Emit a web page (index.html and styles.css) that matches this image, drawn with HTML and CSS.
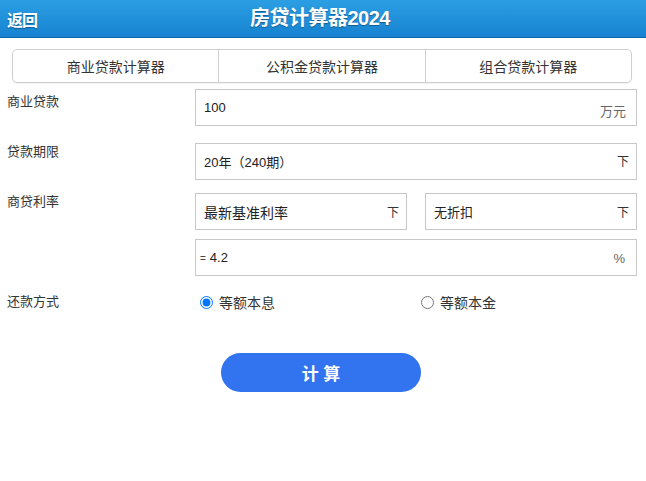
FILE: index.html
```html
<!DOCTYPE html>
<html lang="zh">
<head>
<meta charset="utf-8">
<title>房贷计算器2024</title>
<link rel="stylesheet" href="styles.css">
</head>
<body>
<header class="topbar">
  <a class="back">返回</a>
  <h1 class="title">房贷计算器2024</h1>
</header>
<nav class="tabs">
  <div class="tab">商业贷款计算器</div>
  <div class="tab">公积金贷款计算器</div>
  <div class="tab">组合贷款计算器</div>
</nav>
<main class="form">
  <div class="row row-amount">
    <div class="label">商业贷款</div>
    <div class="field">
      <div class="box box-amount"><span class="val">100</span><span class="unit unit-low">万元</span></div>
    </div>
  </div>
  <div class="row row-term">
    <div class="label">贷款期限</div>
    <div class="field">
      <div class="box"><span class="val val-term">20年（240期）</span><span class="arrow">下</span></div>
    </div>
  </div>
  <div class="row row-rate">
    <div class="label">商贷利率</div>
    <div class="field">
      <div class="pair">
        <div class="box"><span class="val">最新基准利率</span><span class="arrow">下</span></div>
        <div class="box"><span class="val val-small">无折扣</span><span class="arrow">下</span></div>
      </div>
      <div class="box box-rate"><span class="val"><span class="eq">=</span>4.2</span><span class="unit">%</span></div>
    </div>
  </div>
  <div class="row row-pay">
    <div class="label">还款方式</div>
    <div class="field radios">
      <label class="radio"><input type="radio" name="pay" checked><span>等额本息</span></label>
      <label class="radio"><input type="radio" name="pay"><span>等额本金</span></label>
    </div>
  </div>
  <div class="actions">
    <button class="calc">计 算</button>
  </div>
</main>
</body>
</html>
```

FILE: styles.css
```css
* { box-sizing: border-box; }
html, body {
  margin: 0;
  padding: 0;
  background: #fff;
  font-family: "Liberation Sans", "Noto Sans CJK SC", sans-serif;
  color: #333;
  font-size: 13px;
}
.topbar {
  height: 38px;
  display: flex;
  align-items: center;
  position: relative;
  background: linear-gradient(#2c9fe4, #1682d0);
  border-bottom: 1px solid #0f66a8;
}
.back {
  color: #fff;
  font-weight: bold;
  font-size: 16px;
  padding-left: 7px;
  letter-spacing: -1px;
  text-shadow: 0 1px 1px rgba(0,0,0,0.35);
}
.title {
  position: absolute;
  left: 0;
  right: 0;
  top: 0;
  margin: 0;
  line-height: 37px;
  text-align: center;
  color: #fff;
  font-size: 20px;
  font-weight: bold;
  letter-spacing: -0.5px;
  padding-right: 6px;
  text-shadow: 0 1px 1px rgba(0,0,0,0.35);
  pointer-events: none;
}
.tabs {
  display: flex;
  margin: 11px 14px 0 12px;
  height: 34px;
  border: 1px solid #cfcfcf;
  border-radius: 5px;
  box-shadow: 0 1px 1px rgba(0,0,0,0.06);
}
.tab {
  flex: 1;
  display: flex;
  align-items: center;
  justify-content: center;
  color: #333;
  font-size: 14px;
}
.tab + .tab { border-left: 1px solid #cfcfcf; }
.form { padding: 0 9px 0 7px; }
.row {
  display: grid;
  grid-template-columns: 188px 1fr;
}
.row-amount { margin-top: 6px; }
.row-term { margin-top: 17px; }
.row-rate { margin-top: 13px; }
.row-pay { margin-top: 14px; }
.label {
  line-height: 16px;
  padding-top: 5px;
  color: #333;
}
.row-term .label, .row-rate .label { padding-top: 1px; }
.row-pay .label { padding-top: 4px; }
.field { display: flex; flex-direction: column; gap: 9px; }
.pair { display: flex; gap: 18px; }
.pair .box { flex: 1; }
.box {
  height: 37px;
  border: 1px solid #c8c8c8;
  display: flex;
  align-items: center;
  justify-content: space-between;
  padding: 0 9px 0 8px;
  color: #222;
  font-size: 14px;
}
.box-amount .val { font-size: 13px; }
.val-term { font-size: 13px; }
.val-small { font-size: 13px; }
.box-amount { padding-right: 10px; }
.unit { color: #666; font-size: 13px; }
.unit-low { position: relative; top: 3px; }
.box-rate { padding-left: 4px; padding-right: 11px; }
.box-rate .val { font-size: 13px; }
.box-rate .unit { position: relative; top: 1px; }
.eq { font-size: 10px; margin-right: 4px; color: #444; }
.arrow { font-size: 12px; color: #333; margin-right: -2px; }
.row-term .arrow { position: relative; top: -1px; }
.radios {
  flex-direction: row;
  gap: 0;
  height: 24px;
  align-items: center;
}
.radio {
  display: flex;
  align-items: center;
  width: 221px;
  color: #333;
  font-size: 14px;
}
.radio input {
  margin: 0 6px 0 5px;
  width: 13px;
  height: 13px;
}
.actions {
  display: flex;
  justify-content: center;
  padding-right: 2px;
  margin-top: 39px;
}
.calc {
  width: 200px;
  height: 39px;
  border: none;
  border-radius: 20px;
  background: #3273ef;
  color: #fff;
  font-family: "Liberation Sans", "Noto Sans CJK SC", sans-serif;
  font-weight: bold;
  font-size: 17px;
  letter-spacing: 0;
}
```
